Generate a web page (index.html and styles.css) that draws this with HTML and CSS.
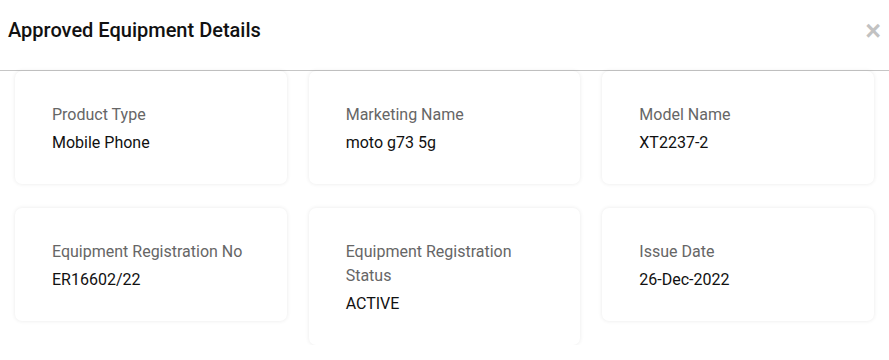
FILE: index.html
```html
<!DOCTYPE html>
<html lang="en">
<head>
<meta charset="utf-8">
<title>Approved Equipment Details</title>
<link rel="stylesheet" href="styles.css">
</head>
<body>
<div class="modal">
  <div class="modal-header">
    <h4 class="modal-title">Approved Equipment Details</h4>
    <button class="close" type="button" aria-label="Close">&times;</button>
  </div>
  <div class="modal-body">
    <div class="card"><div class="label">Product Type</div><div class="value">Mobile Phone</div></div>
    <div class="card"><div class="label">Marketing Name</div><div class="value">moto g73 5g</div></div>
    <div class="card"><div class="label">Model Name</div><div class="value">XT2237-2</div></div>
    <div class="card"><div class="label">Equipment Registration No</div><div class="value">ER16602/22</div></div>
    <div class="card"><div class="label">Equipment Registration Status</div><div class="value">ACTIVE</div></div>
    <div class="card"><div class="label">Issue Date</div><div class="value">26-Dec-2022</div></div>
  </div>
</div>
</body>
</html>
```

FILE: styles.css
```css
* { box-sizing: border-box; }
html, body {
  margin: 0;
  padding: 0;
  background: #fff;
  font-family: Roboto, "Liberation Sans", Arial, sans-serif;
}
.modal { width: 889px; }
.modal-header {
  height: 71px;
  border-bottom: 1px solid #c6c6c6;
  display: flex;
  align-items: flex-start;
  justify-content: space-between;
  padding: 17px 8px 0 8px;
}
.modal-title {
  margin: 0;
  font-size: 20px;
  font-weight: 500;
  line-height: 26px;
  color: #111;
}
.close {
  border: 0;
  background: none;
  padding: 0;
  margin: 2px 0 0 0;
  font-family: "Liberation Sans", Arial, sans-serif;
  font-size: 27px;
  font-weight: 700;
  line-height: 24px;
  color: #c2c2c2;
  cursor: pointer;
}
.modal-body {
  display: grid;
  grid-template-columns: repeat(3, 1fr);
  column-gap: 22px;
  row-gap: 24px;
  align-items: start;
  padding: 0 15px;
}
.card {
  background: #fff;
  border-radius: 7px;
  box-shadow: 0 0 4px rgba(0, 0, 0, 0.09);
  padding: 31px 36px 29px 37px;
}
.label {
  font-size: 16px;
  line-height: 24px;
  color: #666;
  max-width: 200px;
  padding-top: 1px;
  margin-bottom: -1px;
}
.value {
  margin-top: 5px;
  font-size: 16px;
  line-height: 24px;
  color: #111;
}
```
